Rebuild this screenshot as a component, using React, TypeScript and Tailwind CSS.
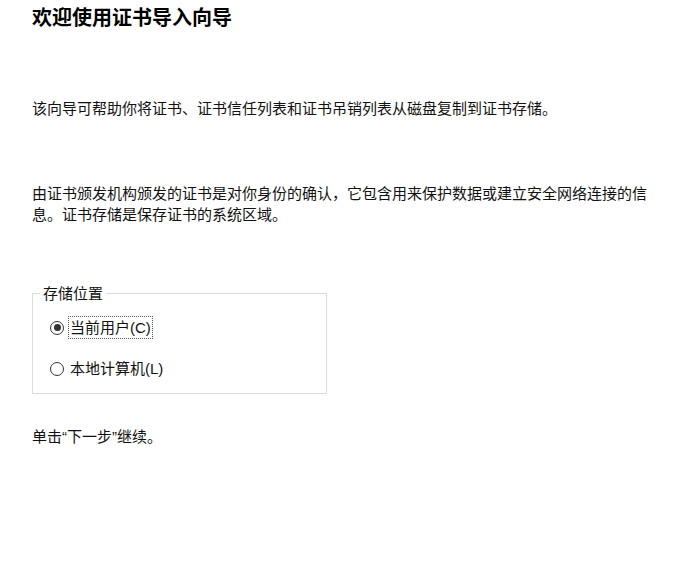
import React from 'react';

const font = { fontFamily: '"Liberation Sans", "Noto Sans CJK SC", sans-serif' };

function Radio({ checked, label, focused }: { checked?: boolean; label: string; focused?: boolean }) {
  return (
    <div className="flex h-[23px] items-center">
      <span className="-ml-[1px] flex h-[14px] w-[14px] shrink-0 items-center justify-center rounded-full border-[1.5px] border-[#333333] bg-white">
        {checked && <span className="h-[7px] w-[7px] rounded-full bg-[#333333]" />}
      </span>
      <span
        className={`ml-[4px] flex h-[23px] items-center px-[1px] ${
          focused ? 'border border-dotted border-[#555555]' : 'border border-transparent'
        }`}
      >
        {label}
      </span>
    </div>
  );
}

export default function App() {
  return (
    <div className="h-[586px] w-[694px] bg-white pl-8 text-[15px] leading-[21px] text-[#111111]" style={font}>
      <h1 className="pt-2 text-[20px] font-bold leading-[20px] text-black">欢迎使用证书导入向导</h1>

      <p className="mt-[70px]">该向导可帮助你将证书、证书信任列表和证书吊销列表从磁盘复制到证书存储。</p>

      <p className="mt-[64px] w-[622px]">
        由证书颁发机构颁发的证书是对你身份的确认，它包含用来保护数据或建立安全网络连接的信息。证书存储是保存证书的系统区域。
      </p>

      <fieldset className="mt-[58px] w-[295px] border border-[#dcdcdc] pb-[13px]">
        <legend className="ml-[7px] px-[3px]">存储位置</legend>
        <div className="mt-[12px] flex flex-col gap-[18px] pl-[18px]">
          <Radio checked focused label="当前用户(C)" />
          <Radio label="本地计算机(L)" />
        </div>
      </fieldset>

      <p className="mt-[32px]">单击“下一步”继续。</p>
    </div>
  );
}
